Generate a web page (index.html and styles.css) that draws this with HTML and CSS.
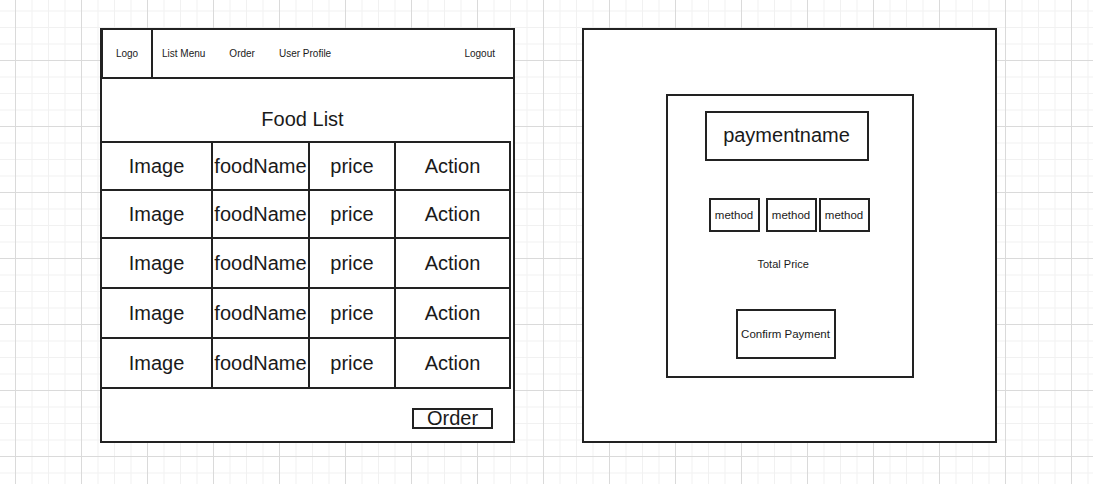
FILE: index.html
```html
<!DOCTYPE html>
<html lang="en">
<head>
    <meta charset="UTF-8">
    <meta name="viewport" content="width=device-width, initial-scale=1.0">
    <title>Food Order Wireframe</title>
    <link rel="stylesheet" href="styles.css">
</head>

<body>
    <div class="board">
        <!-- Page liste des plats -->
        <div class="panel food-page">
            <div class="nav">
                <div class="nav-logo">Logo</div>
                <div class="nav-links">
                    <span>List Menu</span>
                    <span>Order</span>
                    <span>User Profile</span>
                </div>
                <div class="nav-logout">Logout</div>
            </div>

            <div class="page-title">Food List</div>

            <table class="food-table">
                <tr><td class="col-image">Image</td><td class="col-name">foodName</td><td class="col-price">price</td><td class="col-action">Action</td></tr>
                <tr><td>Image</td><td>foodName</td><td>price</td><td>Action</td></tr>
                <tr class="tall"><td>Image</td><td>foodName</td><td>price</td><td>Action</td></tr>
                <tr class="tall"><td>Image</td><td>foodName</td><td>price</td><td>Action</td></tr>
                <tr class="tall"><td>Image</td><td>foodName</td><td>price</td><td>Action</td></tr>
            </table>

            <div class="food-footer">
                <div class="order-btn">Order</div>
            </div>
        </div>

        <!-- Page paiement -->
        <div class="panel payment-page">
            <div class="payment-box">
                <div class="payment-name">paymentname</div>
                <div class="methods">
                    <div class="method">method</div>
                    <div class="method gap-wide">method</div>
                    <div class="method">method</div>
                </div>
                <div class="total-price">Total Price</div>
                <div class="confirm-btn">Confirm Payment</div>
            </div>
        </div>
    </div>
</body>
</html>
```

FILE: styles.css
```css
body {
    margin: 0;
    height: 484px;
    font-family: "Liberation Sans", Arial, sans-serif;
    color: #1a1a1a;
    background-color: #fff;
    background-image:
        linear-gradient(#dadada 1px, transparent 1px),
        linear-gradient(90deg, #dadada 1px, transparent 1px),
        linear-gradient(#f1f1f1 1px, transparent 1px),
        linear-gradient(90deg, #f1f1f1 1px, transparent 1px);
    background-size: 66px 66px, 66px 66px, 16.5px 16.5px, 16.5px 16.5px;
    background-position: 15px 60px;
    overflow: hidden;
}

.board {
    display: flex;
    gap: 67px;
    padding: 28px 0 0 100px;
}

.panel {
    width: 415px;
    height: 415px;
    box-sizing: border-box;
    border: 2px solid #222;
    background-color: #fff;
    display: flex;
    flex-direction: column;
}

/* barre de navigation */
.nav {
    height: 49px;
    box-sizing: border-box;
    border-left: 1px solid #222;
    border-bottom: 2px solid #222;
    display: flex;
    align-items: center;
    font-size: 10px;
}

.nav-logo {
    width: 50px;
    height: 100%;
    box-sizing: border-box;
    border-right: 2px solid #222;
    display: flex;
    align-items: center;
    justify-content: center;
}

.nav-links {
    display: flex;
    gap: 24px;
    margin-left: 9px;
}

.nav-logout {
    margin-left: auto;
    margin-right: 18px;
}

.page-title {
    height: 62px;
    box-sizing: border-box;
    padding-top: 28px;
    font-size: 20px;
    line-height: 24px;
    text-align: center;
    padding-right: 10px;
}

.food-table {
    border-collapse: collapse;
    margin-left: -2px;
    width: 407px;
    table-layout: fixed;
    font-size: 20px;
}

.food-table td {
    border: 2px solid #222;
    height: 46px;
    padding: 0;
    text-align: center;
    white-space: nowrap;
    overflow: visible;
}

.food-table tr.tall td {
    height: 48px;
}

.col-image { width: 109px; }
.col-name { width: 95px; }
.col-price { width: 84px; }
.col-action { width: 113px; }

.food-footer {
    display: flex;
    justify-content: flex-end;
    padding: 19px 20px 0 0;
}

.order-btn {
    width: 81px;
    height: 21px;
    box-sizing: border-box;
    border: 2px solid #222;
    font-size: 20px;
    line-height: 17px;
    text-align: center;
}

/* page de paiement */
.payment-page {
    align-items: center;
    justify-content: center;
}

.payment-box {
    width: 248px;
    height: 284px;
    box-sizing: border-box;
    border: 2px solid #222;
    display: flex;
    flex-direction: column;
    align-items: flex-start;
    padding: 15px 0 0 37px;
}

.payment-name {
    width: 164px;
    height: 50px;
    box-sizing: border-box;
    border: 2px solid #222;
    display: flex;
    align-items: center;
    justify-content: center;
    font-size: 20px;
}

.methods {
    display: flex;
    gap: 2px;
    margin: 37px 0 0 4px;
}

.method {
    width: 51px;
    height: 34px;
    box-sizing: border-box;
    border: 2px solid #222;
    display: flex;
    align-items: center;
    justify-content: center;
    font-size: 11.5px;
}

.method.gap-wide {
    margin-left: 4px;
}

.total-price {
    margin: 25px 0 0 53px;
    font-size: 11px;
    line-height: 14px;
}

.confirm-btn {
    width: 100px;
    height: 50px;
    box-sizing: border-box;
    border: 2px solid #222;
    margin: 38px 0 0 31px;
    display: flex;
    align-items: center;
    justify-content: center;
    font-size: 11.5px;
    white-space: nowrap;
}
```
